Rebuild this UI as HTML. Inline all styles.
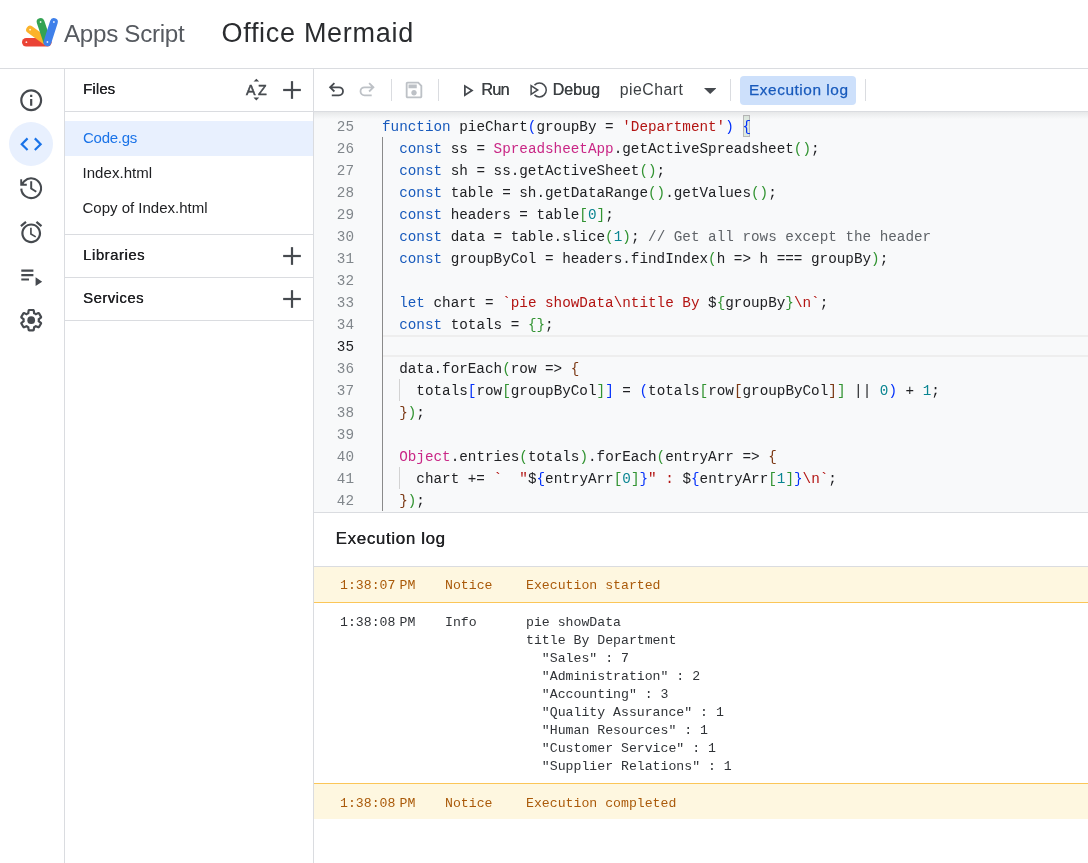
<!DOCTYPE html>
<html lang="en">
<head>
<meta charset="utf-8">
<title>Office Mermaid - Apps Script</title>
<style>
*{box-sizing:border-box;margin:0;padding:0}
html,body{width:1088px;height:863px;overflow:hidden;background:#fff}
body{position:relative;will-change:transform;font-family:"Liberation Sans",Arial,sans-serif;color:#202124}
.abs{position:absolute}
.hl{position:absolute;height:1px;background:#dadce0}
.vl{position:absolute;width:1px;background:#dadce0}
.t{position:absolute;white-space:nowrap;line-height:1}
svg{position:absolute;display:block}
/* header */
#brand{left:64px;top:21.5px;font-size:24.2px;color:#565a60;letter-spacing:-0.3px}
#proj{left:221.5px;top:20px;font-size:27px;color:#2a2c2f;letter-spacing:.7px}
/* side files */
.fl{font-size:15px;color:#202124}
.md{text-shadow:.3px 0 0 currentColor}
.tbt{font-size:15.4px;color:#3c4043}
/* code */
#editor{left:314px;top:112px;width:774px;height:401px;background:#f8f9fa;overflow:hidden}
.ln{position:absolute;left:0;width:40px;text-align:right;font:14.3px/22px "Liberation Mono",monospace;color:#80868b;height:22px}
.cl{position:absolute;left:68px;font:14.3px/22px "Liberation Mono",monospace;color:#202124;white-space:pre;height:22px}
.k{color:#185abc}.s{color:#b31412}.c{color:#c92786}.n{color:#098591}.m{color:#5f6368}
.b1{color:#0431fa}.b2{color:#319331}.b3{color:#7b3814}
/* log */
.lg{position:absolute;font:13.2px/18px "Liberation Mono",monospace;white-space:pre;color:#303337}
.nt{color:#aa5a0a}
.nb{font-size:7px}
.ln.cur{color:#202124}
.bm{}
</style>
</head>
<body>
<!-- header -->
<div class="t" id="brand">Apps Script</div>
<div class="t" id="proj">Office Mermaid</div>
<div class="hl" style="left:0;top:68px;width:1088px"></div>
<!-- rail -->
<div class="vl" style="left:64px;top:69px;height:794px"></div>
<div class="abs" style="left:9px;top:122px;width:44px;height:44px;border-radius:50%;background:#e8f0fe"></div>
<svg style="left:17.8px;top:86.8px" width="26.4" height="26.4" viewBox="0 0 24 24" fill="#464a4f"><path d="M11 7h2v2h-2zm0 4h2v6h-2zm1-9C6.48 2 2 6.48 2 12s4.48 10 10 10 10-4.48 10-10S17.52 2 12 2zm0 18c-4.41 0-8-3.59-8-8s3.59-8 8-8 8 3.59 8 8-3.59 8-8 8z"/></svg>
<svg style="left:17.8px;top:130.8px" width="26.4" height="26.4" viewBox="0 0 24 24" fill="#1a73e8"><path d="M9.4 16.6L4.8 12l4.6-4.6L8 6l-6 6 6 6 1.4-1.4zm5.2 0l4.6-4.6-4.6-4.6L16 6l6 6-6 6-1.4-1.4z"/></svg>
<svg style="left:17.8px;top:174.8px" width="26.4" height="26.4" viewBox="0 0 24 24" fill="none" stroke="#464a4f" stroke-width="1.9"><path d="M3 12.4A9 9 0 1 0 5.7 5.6L3.4 8.4"/><path d="M2.9 3.8v5.1h5.100" stroke-width="1.700"/><path d="M2.900 5.500v3.400h3.400z" fill="#464a4f" stroke="none"/><path d="M12 5.700v6.600l4.600 2.900" stroke-width="1.800"/></svg>
<svg style="left:17.8px;top:218.8px" width="26.4" height="26.4" viewBox="0 0 24 24" fill="#464a4f"><path d="M22 5.72l-4.6-3.86-1.29 1.53 4.6 3.86L22 5.72zM7.88 3.39L6.6 1.86 2 5.71l1.29 1.53 4.59-3.85zM12.5 8H11v6l4.75 2.85.75-1.23-4-2.37V8zM12 4c-4.97 0-9 4.03-9 9s4.02 9 9 9c4.97 0 9-4.03 9-9s-4.03-9-9-9zm0 16c-3.87 0-7-3.13-7-7s3.13-7 7-7 7 3.13 7 7-3.13 7-7 7z"/></svg>
<svg style="left:17.8px;top:262.8px" width="26.4" height="26.4" viewBox="0 0 24 24" fill="#464a4f"><path d="M3 10h11v2H3zm0-4h11v2H3zm0 8h7v2H3zm13-1v8l6-4z"/></svg>
<svg style="left:17.8px;top:306.8px" width="26.4" height="26.4" viewBox="0 0 24 24" fill="#464a4f"><path d="M13.85 22.25h-3.7c-.74 0-1.36-.54-1.45-1.27l-.27-1.89c-.27-.14-.53-.29-.79-.46l-1.8.72c-.7.26-1.47-.03-1.81-.65L2.2 15.53c-.35-.66-.2-1.44.36-1.88l1.53-1.19c-.01-.15-.02-.3-.02-.46 0-.15.01-.31.02-.46l-1.52-1.19c-.59-.45-.74-1.26-.37-1.88l1.85-3.19c.34-.62 1.11-.9 1.79-.63l1.81.73c.26-.17.52-.32.78-.46l.27-1.91c.09-.7.71-1.25 1.44-1.25h3.7c.74 0 1.36.54 1.45 1.27l.27 1.89c.27.14.53.29.79.46l1.8-.72c.71-.26 1.48.03 1.82.65l1.84 3.18c.36.66.2 1.44-.36 1.88l-1.53 1.19c.01.15.02.3.02.46s-.01.31-.02.46l1.52 1.19c.56.45.72 1.23.37 1.86l-1.86 3.22c-.34.62-1.11.9-1.8.63l-1.8-.72c-.26.17-.52.32-.78.46l-.27 1.91c-.1.68-.72 1.22-1.46 1.22zm-3.23-2h2.76l.37-2.55.53-.22c.44-.18.88-.44 1.34-.78l.45-.34 2.38.96 1.38-2.4-2.03-1.58.07-.56c.03-.26.06-.51.06-.78s-.03-.53-.06-.78l-.07-.56 2.03-1.58-1.39-2.4-2.39.96-.45-.35c-.42-.32-.87-.58-1.33-.77l-.52-.22-.37-2.55h-2.76l-.37 2.55-.53.21c-.44.19-.88.44-1.34.79l-.45.33-2.38-.95-1.39 2.39 2.03 1.58-.07.56a7 7 0 0 0-.06.79c0 .26.02.53.06.78l.07.56-2.03 1.58 1.38 2.4 2.39-.96.45.35c.43.33.86.58 1.33.77l.53.22.38 2.55z"/><circle cx="12" cy="12" r="3.5"/></svg>
<svg style="left:16px;top:10px" width="50" height="46" viewBox="16 10 50 46" fill="none" stroke-linecap="round" stroke-width="7.8">
<line x1="26.2" y1="42.3" x2="47.4" y2="42.3" stroke="#ea4335" stroke-width="8.4"/>
<line x1="30.1" y1="29.7" x2="46.6" y2="41.6" stroke="#fbb32b"/>
<line x1="40.6" y1="22" x2="47.1" y2="41.3" stroke="#34a353"/>
<line x1="53.9" y1="22" x2="47.4" y2="42.2" stroke="#3f80ea"/>
<g fill="#fff" stroke="none" opacity=".85"><circle cx="26.4" cy="42.2" r=".9"/><circle cx="30.1" cy="29.7" r=".9"/><circle cx="40.6" cy="22" r=".9"/><circle cx="53.9" cy="22" r=".9"/><circle cx="47.4" cy="42" r=".9"/></g>
</svg>
<!-- files panel -->
<svg style="left:281.75px;top:79.80px" width="20" height="20" viewBox="0 0 20 20" fill="#464a4f"><rect x="1.15" y="8.9" width="17.7" height="2.2"/><rect x="8.9" y="1.15" width="2.2" height="17.7"/></svg>
<svg style="left:281.75px;top:245.80px" width="20" height="20" viewBox="0 0 20 20" fill="#464a4f"><rect x="1.15" y="8.9" width="17.7" height="2.2"/><rect x="8.9" y="1.15" width="2.2" height="17.7"/></svg>
<svg style="left:281.75px;top:288.80px" width="20" height="20" viewBox="0 0 20 20" fill="#464a4f"><rect x="1.15" y="8.9" width="17.7" height="2.2"/><rect x="8.9" y="1.15" width="2.2" height="17.7"/></svg>
<svg style="left:242px;top:76px" width="28" height="28" viewBox="242 76 28 28" fill="#464a4f">
<path d="M253.5 81.6l2.85-2.8 2.85 2.8zM253.5 97.6h5.7l-2.85 2.9z"/>
<g font-family="Liberation Sans, Arial, sans-serif" font-size="14.200" stroke="#464a4f" stroke-width=".55"><text x="246" y="94.700">A</text><text x="258" y="94.700">Z</text></g>
</svg>
<div class="vl" style="left:313px;top:69px;height:794px"></div>
<div class="t fl md" style="left:83px;top:81.4px;letter-spacing:.1px">Files</div>
<div class="hl" style="left:65px;top:111px;width:248px"></div>
<div class="abs" style="left:65px;top:121px;width:248px;height:34.600px;background:#e8f0fe"></div>
<div class="t fl" style="left:83px;top:130.2px;color:#1a73e8;letter-spacing:-.25px">Code.gs</div>
<div class="t fl" style="left:82.5px;top:165.4px;letter-spacing:.05px">Index.html</div>
<div class="t fl" style="left:82.5px;top:199.900px;letter-spacing:0">Copy of Index.html</div>
<div class="hl" style="left:65px;top:234px;width:248px"></div>
<div class="t fl md" style="left:83px;top:247.300px;letter-spacing:.5px">Libraries</div>
<div class="hl" style="left:65px;top:277px;width:248px"></div>
<div class="t fl md" style="left:83px;top:290.300px;letter-spacing:.42px">Services</div>
<div class="hl" style="left:65px;top:320px;width:248px"></div>
<!-- toolbar -->
<div class="abs" id="toolbar" style="left:314px;top:69px;width:774px;height:43px;background:#fff;border-bottom:1px solid #dadce0;z-index:2"></div>
<div class="abs" style="left:314px;top:112px;width:774px;height:7px;background:linear-gradient(rgba(60,64,67,.09),rgba(60,64,67,0));z-index:2"></div>
<div class="abs" style="left:314px;top:69px;width:774px;height:43px;z-index:3">
<svg style="left:12px;top:10px" width="24" height="24" viewBox="326 79 24 24" fill="none" stroke="#464a4f" stroke-width="1.8"><path d="M334.400 83.100l-4.300 4.200 4.300 4.200M330.300 87.300h8.700a4 4 0 0 1 0 8h-7.200"/></svg>
<svg style="left:42px;top:10px" width="24" height="24" viewBox="356 79 24 24" fill="none" stroke="#bdc1c6" stroke-width="1.8"><path d="M369.100 83.100l4.300 4.200-4.300 4.200M373.200 87.300h-8.700a4 4 0 0 0 0 8h7.200"/></svg>
<div class="vl" style="left:77px;top:10px;height:22px"></div>
<svg style="left:89.250px;top:10px" width="22" height="22" viewBox="0 0 24 24" fill="#bdc1c6"><path d="M17 3H5c-1.11 0-2 .9-2 2v14c0 1.1.89 2 2 2h14c1.1 0 2-.9 2-2V7l-4-4zm2 16H5V5h11.17L19 7.83V19zm-7-7c-1.66 0-3 1.34-3 3s1.34 3 3 3 3-1.34 3-3-1.34-3-3-3zM6 6h9v4H6z"/></svg>
<div class="vl" style="left:124px;top:10px;height:22px"></div>
<svg style="left:142.800px;top:10.600px" width="21" height="21" viewBox="0 0 24 24" fill="#464a4f"><path d="M10 8.64L15.27 12 10 15.36V8.64M8 5v14l11-7L8 5z"/></svg>
<div class="t tbt md" style="left:167.300px;top:12px;font-size:16.200px;letter-spacing:-.75px">Run</div>
<svg style="left:210px;top:7px" width="32" height="28" viewBox="524 76 32 28" fill="none" stroke="#464a4f" stroke-width="1.500" stroke-linejoin="miter"><path d="M531.100 85.700v8.600l6.600-4.300z"/><path d="M534.500 85.100a6.900 6.900 0 1 1 0 9.800"/></svg>
<div class="t tbt md" style="left:238.400px;top:12px;font-size:16.200px;letter-spacing:-.05px">Debug</div>
<div class="t tbt" style="left:305.700px;top:13.400px;font-size:15.800px;letter-spacing:.5px">pieChart</div>
<svg style="left:389.800px;top:19.100px" width="12.400" height="6" viewBox="0 0 12.400 6" fill="#464a4f"><path d="M0 0h12.400l-6.200 6z"/></svg>
<div class="vl" style="left:416px;top:10px;height:22px"></div>
<div class="abs" style="left:426px;top:7px;width:116px;height:29px;border-radius:4px;background:#cde0fb"></div>
<div class="t" style="left:435px;top:13px;font-size:15.400px;color:#185abc;-webkit-text-stroke:.25px #185abc;letter-spacing:.55px" id="elbtn">Execution log</div>
<div class="vl" style="left:551px;top:10px;height:22px"></div>
</div>
<!-- editor -->
<div class="abs" id="editor">
<div class="abs" style="left:69px;top:223px;width:705px;height:22px;border-top:2px solid #eeeeee;border-bottom:2px solid #eeeeee"></div>
<div class="abs" style="left:429px;top:3px;width:7px;height:22px;border:1px solid #b9b9b9;background:rgba(0,100,0,.1)"></div>
<div class="abs" style="left:68px;top:25px;width:1px;height:374px;background:#8a8a8a"></div>
<div class="abs" style="left:85px;top:267px;width:1px;height:22px;background:#d3d3d3"></div>
<div class="abs" style="left:85px;top:355px;width:1px;height:22px;background:#d3d3d3"></div>
<div class="ln" style="top:4px">25</div><div class="cl" style="top:4px"><span class="k">function</span> pieChart<span class="b1">(</span>groupBy = <span class="s">'Department'</span><span class="b1">)</span> <span class="b1 bm">{</span></div>
<div class="ln" style="top:26px">26</div><div class="cl" style="top:26px">  <span class="k">const</span> ss = <span class="c">SpreadsheetApp</span>.getActiveSpreadsheet<span class="b2">()</span>;</div>
<div class="ln" style="top:48px">27</div><div class="cl" style="top:48px">  <span class="k">const</span> sh = ss.getActiveSheet<span class="b2">()</span>;</div>
<div class="ln" style="top:70px">28</div><div class="cl" style="top:70px">  <span class="k">const</span> table = sh.getDataRange<span class="b2">()</span>.getValues<span class="b2">()</span>;</div>
<div class="ln" style="top:92px">29</div><div class="cl" style="top:92px">  <span class="k">const</span> headers = table<span class="b2">[</span><span class="n">0</span><span class="b2">]</span>;</div>
<div class="ln" style="top:114px">30</div><div class="cl" style="top:114px">  <span class="k">const</span> data = table.slice<span class="b2">(</span><span class="n">1</span><span class="b2">)</span>; <span class="m">// Get all rows except the header</span></div>
<div class="ln" style="top:136px">31</div><div class="cl" style="top:136px">  <span class="k">const</span> groupByCol = headers.findIndex<span class="b2">(</span>h =&gt; h === groupBy<span class="b2">)</span>;</div>
<div class="ln" style="top:158px">32</div><div class="cl" style="top:158px"></div>
<div class="ln" style="top:180px">33</div><div class="cl" style="top:180px">  <span class="k">let</span> chart = <span class="s">`pie showData\ntitle By </span>$<span class="b2">{</span>groupBy<span class="b2">}</span><span class="s">\n`</span>;</div>
<div class="ln" style="top:202px">34</div><div class="cl" style="top:202px">  <span class="k">const</span> totals = <span class="b2">{}</span>;</div>
<div class="ln cur" style="top:224px">35</div><div class="cl" style="top:224px"></div>
<div class="ln" style="top:246px">36</div><div class="cl" style="top:246px">  data.forEach<span class="b2">(</span>row =&gt; <span class="b3">{</span></div>
<div class="ln" style="top:268px">37</div><div class="cl" style="top:268px">    totals<span class="b1">[</span>row<span class="b2">[</span>groupByCol<span class="b2">]</span><span class="b1">]</span> = <span class="b1">(</span>totals<span class="b2">[</span>row<span class="b3">[</span>groupByCol<span class="b3">]</span><span class="b2">]</span> || <span class="n">0</span><span class="b1">)</span> + <span class="n">1</span>;</div>
<div class="ln" style="top:290px">38</div><div class="cl" style="top:290px">  <span class="b3">}</span><span class="b2">)</span>;</div>
<div class="ln" style="top:312px">39</div><div class="cl" style="top:312px"></div>
<div class="ln" style="top:334px">40</div><div class="cl" style="top:334px">  <span class="c">Object</span>.entries<span class="b2">(</span>totals<span class="b2">)</span>.forEach<span class="b2">(</span>entryArr =&gt; <span class="b3">{</span></div>
<div class="ln" style="top:356px">41</div><div class="cl" style="top:356px">    chart += <span class="s">`  "</span>$<span class="b1">{</span>entryArr<span class="b2">[</span><span class="n">0</span><span class="b2">]</span><span class="b1">}</span><span class="s">" : </span>$<span class="b1">{</span>entryArr<span class="b2">[</span><span class="n">1</span><span class="b2">]</span><span class="b1">}</span><span class="s">\n`</span>;</div>
<div class="ln" style="top:378px">42</div><div class="cl" style="top:378px">  <span class="b3">}</span><span class="b2">)</span>;</div>
</div>
<!-- log -->
<div class="hl" style="left:314px;top:512px;width:774px"></div>
<div class="t md" style="left:335.5px;top:530.4px;font-size:17px;color:#202124;letter-spacing:.62px">Execution log</div>

<div class="abs" style="left:314px;top:566px;width:774px;height:37px;background:#fef7e0;border-top:1px solid #dadce0;border-bottom:1px solid #fbc658"></div>
<div class="lg nt" style="left:340px;top:577px">1:38:07<span class="nb"> </span>PM</div>
<div class="lg nt" style="left:445px;top:577px">Notice</div>
<div class="lg nt" style="left:526px;top:577px">Execution started</div>
<div class="lg" style="left:340px;top:614px">1:38:08<span class="nb"> </span>PM</div>
<div class="lg" style="left:445px;top:614px">Info</div>
<div class="lg" style="left:526px;top:614px">pie showData
title By Department
  "Sales" : 7
  "Administration" : 2
  "Accounting" : 3
  "Quality Assurance" : 1
  "Human Resources" : 1
  "Customer Service" : 1
  "Supplier Relations" : 1</div>
<div class="abs" style="left:314px;top:783px;width:774px;height:36px;background:#fef7e0;border-top:1px solid #fbc658"></div>
<div class="lg nt" style="left:340px;top:795px">1:38:08<span class="nb"> </span>PM</div>
<div class="lg nt" style="left:445px;top:795px">Notice</div>
<div class="lg nt" style="left:526px;top:795px">Execution completed</div>
</body>
</html>
